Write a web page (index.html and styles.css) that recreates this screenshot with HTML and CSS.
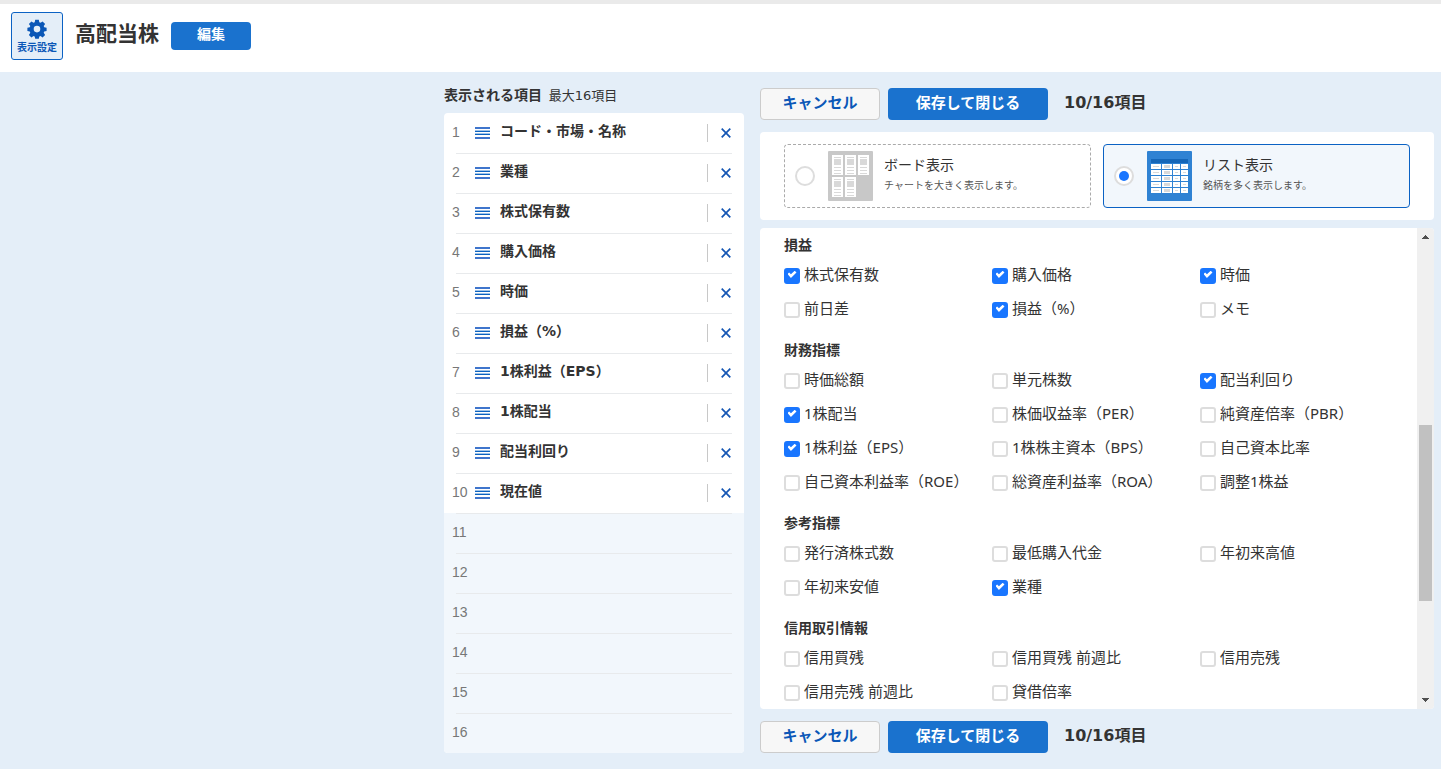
FILE: index.html
```html
<!DOCTYPE html>
<html lang="ja">
<head>
<meta charset="utf-8">
<title>高配当株</title>
<link rel="stylesheet" href="styles.css">
</head>
<body>
<svg class="defs" width="0" height="0" aria-hidden="true">
  <symbol id="handle" viewBox="0 0 15 12"><path fill="#3f75cc" d="M0 0h15v2H0zM0 10h15v2H0z"/><path fill="#9fc3e8" d="M0 3h15v1H0zM0 6h15v1H0z"/><path fill="#0a62c0" d="M0 4h15v1H0zM0 7h15v1H0z"/></symbol>
  <symbol id="cross" viewBox="0 0 10 10"><path fill="none" stroke="#1556b4" stroke-width="1.7" d="M.7.7l8.6 8.6M9.3.7L.7 9.3"/></symbol>
</svg>
<header class="header">
  <button class="settings" type="button">
    <svg width="20" height="20" viewBox="0 0 20 20"><path fill="#0b57b7" fill-rule="evenodd" d="M8.2.8h3.6l.5 2.4 1.2.5 2.1-1.3 2.5 2.5-1.4 2.1.5 1.2 2.4.5v3.4l-2.4.5-.5 1.2 1.4 2.1-2.5 2.5-2.1-1.3-1.2.5-.5 2.2H8.2l-.5-2.2-1.2-.5-2.1 1.3-2.5-2.5 1.4-2.1-.5-1.2-2.4-.5V8.7l2.4-.5.5-1.2-1.4-2.1 2.5-2.5 2.1 1.3 1.2-.5zM10 6.8a3.3 3.3 0 1 0 0 6.6 3.3 3.3 0 0 0 0-6.6z"/></svg>
    <span>表示設定</span>
  </button>
  <h1 class="title">高配当株</h1>
  <button class="edit" type="button">編集</button>
</header>
<main class="main">
  <section class="selected">
    <h2 class="selected-title">表示される項目 <small>最大16項目</small></h2>
    <ol class="rows" id="rows"></ol>
  </section>
  <section class="editor">
    <div class="actions">
      <button class="cancel" type="button">キャンセル</button>
      <button class="save" type="button">保存して閉じる</button>
      <strong class="count">10/16項目</strong>
    </div>
    <div class="modes">
      <label class="mode">
        <input class="radio" type="radio" name="mode">
        <svg width="45" height="50" viewBox="0 0 45 50">
          <rect width="45" height="50" rx="1" fill="#c8c8c8"/>
          <defs><g id="sheet"><path fill="#fff" d="M0 0h11v20H0z"/><path fill="#d9d9d9" d="M2 2h7v1H2zM2 4h7v6H2zM2 12h7v1H2zM2 15h7v1H2zM2 18h7v1H2z"/></g></defs>
          <use href="#sheet" x="4" y="4"/><use href="#sheet" x="17" y="4"/><use href="#sheet" x="30" y="4"/><use href="#sheet" x="4" y="26"/><use href="#sheet" x="17" y="26"/>
        </svg>
        <span class="mode-text"><span class="mode-name">ボード表示</span><span class="mode-note">チャートを大きく表示します。</span></span>
      </label>
      <label class="mode">
        <input class="radio" type="radio" name="mode" checked>
        <svg width="45" height="50" viewBox="0 0 45 50">
          <rect width="45" height="50" rx="1" fill="#2f82d3"/>
          <path fill="#1566b8" d="M4 8h37v4H4z"/>
          <defs><g id="line"><path fill="#fff" d="M0 0h10v5H0zM11 0h10v5H11zM22 0h7v5h-7zM30 0h7v5h-7z"/><path fill="#d9d9d9" d="M2 2h6v1H2zM13 1h6v3h-6zM24 2h3v1h-3zM32 2h3v1h-3z"/></g></defs>
          <use href="#line" x="4" y="13"/><use href="#line" x="4" y="19"/><use href="#line" x="4" y="25"/><use href="#line" x="4" y="31"/><use href="#line" x="4" y="37"/>
        </svg>
        <span class="mode-text"><span class="mode-name">リスト表示</span><span class="mode-note">銘柄を多く表示します。</span></span>
      </label>
    </div>
    <div class="options">
      <div class="groups" id="groups"></div>
      <div class="scrollbar" aria-hidden="true">
        <svg width="7" height="4" viewBox="0 0 7 4"><path fill="#505050" d="M3 0h1v1h1v1h1v1h1v1H0V3h1V2h1V1h1z"/></svg>
        <div class="track"><div class="thumb"></div></div>
        <svg width="7" height="4" viewBox="0 0 7 4"><path fill="#505050" d="M0 0h7v1H6v1H5v1H4v1H3V3H2V2H1V1H0z"/></svg>
      </div>
    </div>
    <div class="actions">
      <button class="cancel" type="button">キャンセル</button>
      <button class="save" type="button">保存して閉じる</button>
      <strong class="count">10/16項目</strong>
    </div>
  </section>
</main>
<script src="app.js"></script>
</body>
</html>
```
FILE: styles.css
```css
* { box-sizing: border-box; }
body {
  margin: 0;
  background: #fff;
  color: #333;
  font-family: "Noto Sans", "Noto Sans CJK JP", sans-serif;
  font-size: 14px;
}
button { font-family: inherit; font-weight: 700; padding: 0; cursor: pointer; }
.defs { display: block; position: absolute; }
.header {
  display: flex;
  align-items: flex-start;
  border-top: 4px solid #eaeaea;
  padding: 8px 11px 12px;
}
.settings {
  width: 52px;
  height: 48px;
  display: flex;
  flex-direction: column;
  align-items: center;
  gap: 1px;
  padding-top: 6px;
  border: 1px solid #0b62c4;
  border-radius: 3px;
  background: #e4eef8;
  color: #0b57b7;
  font-size: 10px;
  line-height: 14px;
}
.settings svg { flex: none; }
.title { margin: 5px 12px 0; font-size: 21px; line-height: 32px; }
.edit {
  width: 80px;
  height: 28px;
  margin-top: 10px;
  padding-bottom: 4px;
  border: 0;
  border-radius: 4px;
  background: #1a72ce;
  color: #fff;
  font-size: 14px;
  line-height: 24px;
}
.main {
  display: grid;
  grid-template-columns: 300px minmax(0, 674px);
  justify-content: end;
  gap: 16px;
  padding: 16px 7px 16px 16px;
  background: #e4eef8;
}
.selected-title { margin: 0 0 10px; font-size: 14px; line-height: 14px; }
.selected-title small { margin-left: 3px; font-family: "DejaVu Sans", "Noto Sans CJK JP", sans-serif; font-size: 13px; font-weight: 400; }
.rows { margin: 0; padding: 0; list-style: none; border-radius: 4px; overflow: hidden; background: #fff; }
.row { height: 40px; padding: 0 12px 0 8px; display: flex; position: relative; }
.row + .row::before {
  content: "";
  position: absolute;
  top: 0;
  left: 12px;
  right: 12px;
  height: 1px;
  background: #e8eaec;
}
.empty { background: #f2f7fc; }
.number { width: 23px; font-family: "Liberation Sans", sans-serif; color: #777; line-height: 38px; }
.handle { width: 15px; height: 12px; margin-top: 14px; }
.name { flex: 1; padding-left: 10px; font-family: "DejaVu Sans", "Noto Sans CJK JP", sans-serif; font-weight: 700; line-height: 36px; }
.remove {
  width: 25px;
  height: 18px;
  margin-top: 11px;
  padding: 4px 0 0 13px;
  border: 0;
  border-left: 1px solid #c8c8c8;
  background: none;
  display: flex;
}
.remove svg { width: 10px; height: 10px; flex: none; }
.actions { display: flex; gap: 8px; font-size: 15px; }
.actions button { height: 32px; padding-bottom: 4px; border-radius: 4px; font-size: 15px; line-height: 24px; }
.cancel { width: 120px; border: 1px solid #ccc; background: #f7f7f7; color: #0b57b7; }
.save { width: 160px; border: 0; background: #1a72ce; color: #fff; }
.count { margin-left: 8px; font-family: "DejaVu Sans", "Noto Sans CJK JP", sans-serif; font-size: 16px; line-height: 30px; }
.modes {
  display: grid;
  grid-template-columns: 1fr 1fr;
  gap: 12px;
  margin: 12px 0 8px;
  padding: 12px 24px;
  border-radius: 4px;
  background: #fff;
}
.mode { height: 64px; display: flex; align-items: center; padding-left: 10px; border: 1px dashed #aaa; border-radius: 4px; }
.mode:has(:checked) { border: 1px solid #0b62c4; background: #f2f7fc; }
.mode svg { margin: 0 11px 0 13px; flex: none; }
.radio {
  appearance: none;
  width: 20px;
  height: 20px;
  margin: 0;
  border: 2px solid #ddd;
  border-radius: 50%;
  background: #fff;
  display: grid;
  place-content: center;
}
.radio:checked::before { content: ""; width: 10px; height: 10px; border-radius: 50%; background: #1976ff; }
.mode-text { display: flex; flex-direction: column; gap: 2px; padding-bottom: 4px; }
.mode-name { font-size: 14px; line-height: 20px; }
.mode-note { font-size: 10px; line-height: 16px; color: #555; }
.options { display: flex; height: 481px; margin-bottom: 12px; border-radius: 4px; overflow: hidden; background: #fff; }
.groups { flex: 1; padding: 6px 9px 0 24px; display: flex; flex-direction: column; gap: 13px; }
.group { margin: 0; padding: 0; border: 0; min-width: 0; }
.group legend { margin-bottom: 2px; padding: 0; font-weight: 700; font-size: 14px; line-height: 22px; }
.checks { display: grid; grid-template-columns: repeat(3, 1fr); grid-auto-rows: 34px; }
.check { display: flex; align-items: center; gap: 4px; padding-bottom: 2px; font-size: 15px; line-height: 20px; white-space: nowrap; }
.check input {
  appearance: none;
  width: 16px;
  height: 16px;
  margin: 3px 0 0;
  border: 2px solid #ddd;
  border-radius: 3px;
  background: #fff;
}
.check input:checked { border-color: #1976ff; background: #1976ff; display: grid; justify-content: center; }
.check input:checked::before {
  content: "";
  width: 9px;
  height: 8px;
  margin-top: 1px;
  background: #fff;
  clip-path: polygon(0 45%, 18% 24%, 38% 46%, 80% 2%, 100% 24%, 38% 94%);
}
.scrollbar { width: 17px; padding: 7px 0; display: flex; flex-direction: column; align-items: center; background: #f0f0f0; }
.track { flex: 1; padding-top: 186px; }
.thumb { width: 13px; height: 176px; background: #c1c1c1; }
```
FILE: app.js
```js
const selected = ["コード・市場・名称", "業種", "株式保有数", "購入価格", "時価", "損益（%）", "1株利益（EPS）", "1株配当", "配当利回り", "現在値"];
const groups = [
  ["損益", ["株式保有数", "購入価格", "時価", "前日差", "損益（%）", "メモ"]],
  ["財務指標", ["時価総額", "単元株数", "配当利回り", "1株配当", "株価収益率（PER）", "純資産倍率（PBR）", "1株利益（EPS）", "1株株主資本（BPS）", "自己資本比率", "自己資本利益率（ROE）", "総資産利益率（ROA）", "調整1株益"]],
  ["参考指標", ["発行済株式数", "最低購入代金", "年初来高値", "年初来安値", "業種"]],
  ["信用取引情報", ["信用買残", "信用買残 前週比", "信用売残", "信用売残 前週比", "貸借倍率"]]
];

let rows = "";
for (let i = 0; i < 16; i++) {
  const name = selected[i];
  rows += name
    ? `<li class="row"><span class="number">${i + 1}</span><svg class="handle"><use href="#handle"/></svg><span class="name">${name}</span><button class="remove" type="button" aria-label="${name}を削除"><svg><use href="#cross"/></svg></button></li>`
    : `<li class="row empty"><span class="number">${i + 1}</span></li>`;
}
document.getElementById("rows").innerHTML = rows;

document.getElementById("groups").innerHTML = groups.map(([title, items]) =>
  `<fieldset class="group"><legend>${title}</legend><div class="checks">${items.map(item =>
    `<label class="check"><input type="checkbox"${selected.includes(item) ? " checked" : ""}>${item}</label>`).join("")}</div></fieldset>`
).join("");
```
